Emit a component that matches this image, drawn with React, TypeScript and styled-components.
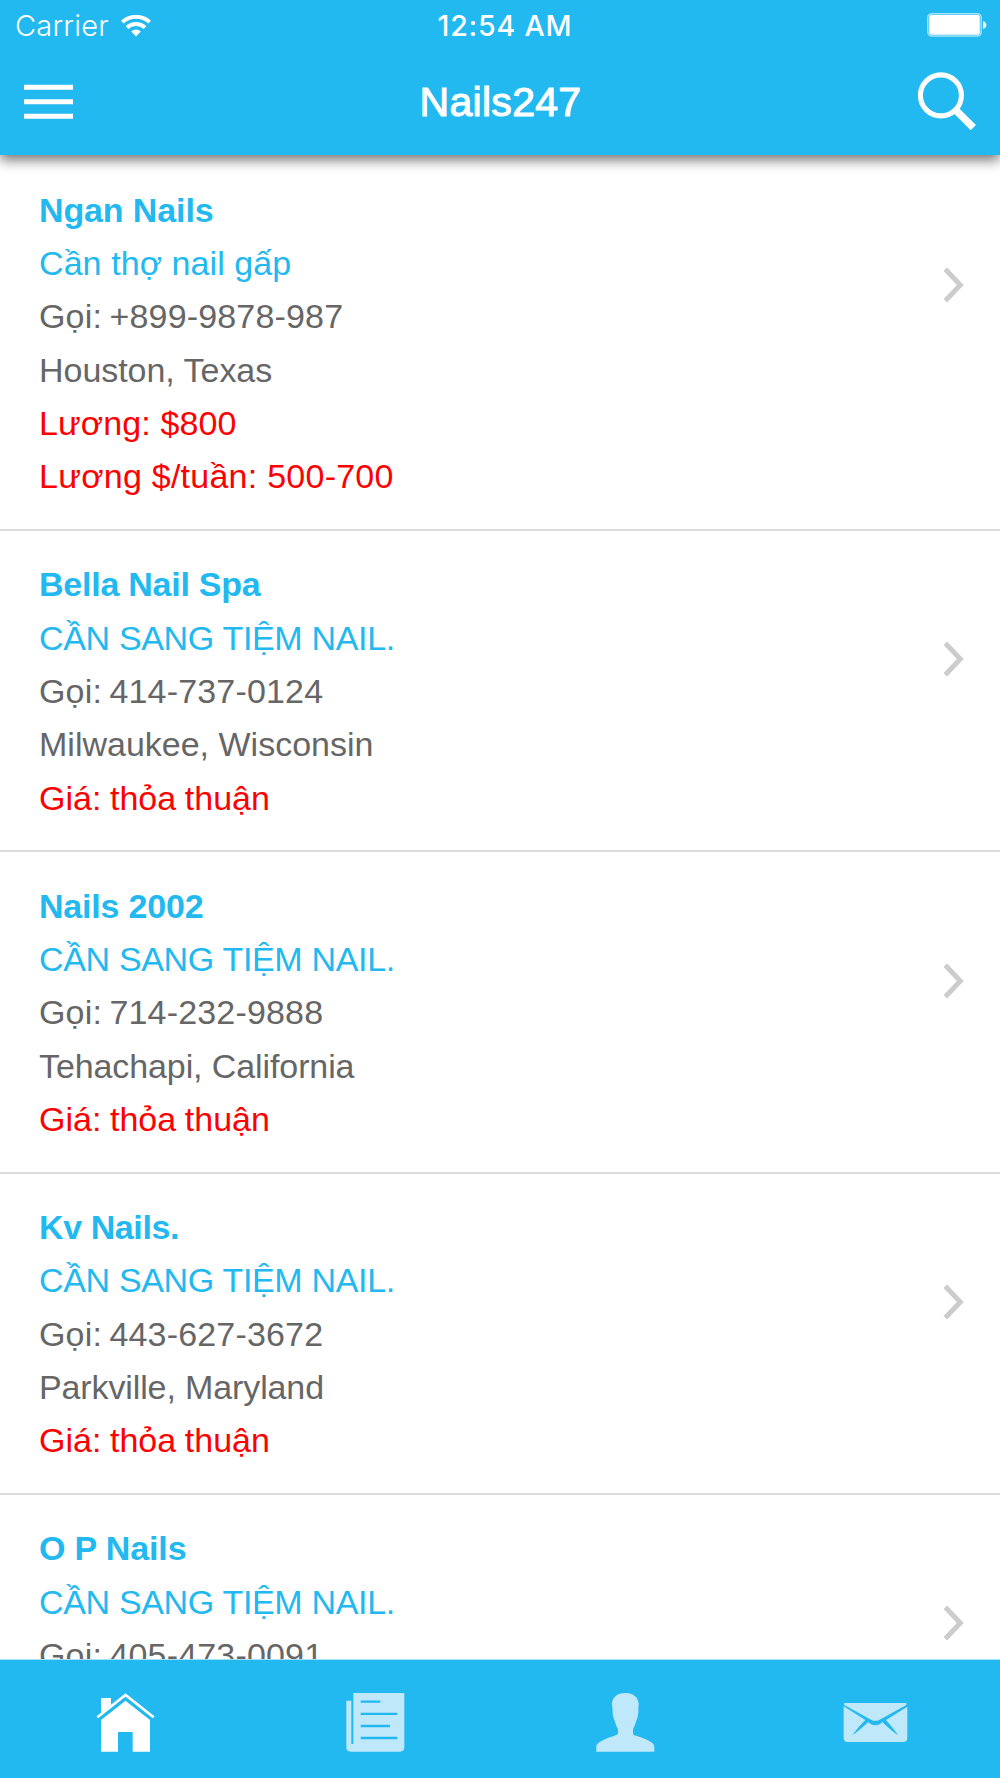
import React from 'react';
import styled, { createGlobalStyle } from 'styled-components';

const BLUE = '#22b8f0';
const PALE = '#bfe9fb';
const GREY = '#666';
const RED = '#ff0000';

const Global = createGlobalStyle`
  * { box-sizing: border-box; }
  html, body { margin: 0; padding: 0; background: #fff; }
  body { font-family: "Liberation Sans", Arial, Helvetica, sans-serif; }
  svg { display: block; flex: none; }
`;

const Screen = styled.div`
  width: 1000px;
  height: 1778px;
  display: flex;
  flex-direction: column;
  overflow: hidden;
  background: #fff;
`;

const Header = styled.header`
  position: relative;
  z-index: 1;
  flex: none;
  height: 155px;
  background: ${BLUE};
  color: #fff;
  box-shadow: 0 5px 12px rgba(0, 0, 0, 0.55);
`;

const StatusBar = styled.div`
  height: 50px;
  display: grid;
  grid-template-columns: 1fr auto 1fr;
  align-items: center;
  padding: 0 13px 0 15px;
  font-family: Inter, sans-serif;
  font-size: 29px;
`;

const Carrier = styled.div`
  display: flex;
  align-items: center;
  gap: 12px;
`;

const CarrierName = styled.span`
  padding-top: 1px;
  line-height: 50px;
  font-weight: 300;
  letter-spacing: 0.2px;
`;

const Clock = styled.time`
  padding: 1px 0 0 8px;
  line-height: 50px;
  font-weight: 500;
  font-size: 28.5px;
  letter-spacing: 0.85px;
`;

const Battery = styled.div`
  justify-self: end;
  margin-top: -1px;
`;

const NavBar = styled.div`
  height: 105px;
  display: grid;
  grid-template-columns: 1fr auto 1fr;
  padding: 0 23px 0 24px;
`;

const IconButton = styled.button<{ $end?: boolean; $top: number }>`
  justify-self: ${(p) => (p.$end ? 'end' : 'start')};
  align-self: start;
  margin: ${(p) => p.$top}px 0 0;
  padding: 0;
  border: 0;
  background: none;
`;

const Title = styled.h1`
  margin: 0;
  font-size: 41px;
  line-height: 105px;
  font-weight: 400;
  letter-spacing: 0.3px;
  -webkit-text-stroke: 1.1px #fff;
`;

const List = styled.main`
  flex: 1;
  min-height: 0;
  overflow: hidden;
  padding-top: 1.5px;
`;

const Item = styled.article`
  display: flex;
  justify-content: space-between;
  align-items: flex-start;
  padding: 27.3px 36px 25.37px 39px;
  border-bottom: 2px solid #dcdcdc;
`;

const Details = styled.div`
  display: flex;
  flex-direction: column;
`;

const Line = styled.p<{ $color: string; $track?: number; $word?: number }>`
  margin: 0;
  font-size: 34px;
  line-height: 53.333px;
  color: ${(p) => p.$color};
  letter-spacing: ${(p) => p.$track ?? 0}px;
  word-spacing: ${(p) => p.$word ?? 0}px;
  white-space: nowrap;
`;

const Name = styled(Line).attrs({ as: 'h2' })`
  font-weight: 700;
`;

const Chevron = styled.svg`
  margin-top: 83px;
`;

const TabBar = styled.nav`
  flex: none;
  height: 119px;
  display: grid;
  grid-template-columns: repeat(4, 1fr);
  border-top: 1px solid #a5e0f8;
  background: ${BLUE};
`;

const Tab = styled.a<{ $active?: boolean }>`
  display: flex;
  justify-content: center;
  padding-top: 30px;
  color: ${(p) => (p.$active ? '#fff' : PALE)};
`;

type Row = { text: string; track: number };

type Listing = {
  name: Row;
  headline: Row;
  phone: string;
  place?: Row;
  prices: Row[];
};

const selling: Row = { text: 'CẦN SANG TIỆM NAIL.', track: -0.33 };
const negotiable: Row = { text: 'Giá: thỏa thuận', track: 0.03 };

const listings: Listing[] = [
  {
    name: { text: 'Ngan Nails', track: -0.12 },
    headline: { text: 'Cần thợ nail gấp', track: 0.08 },
    phone: '+899-9878-987',
    place: { text: 'Houston, Texas', track: -0.04 },
    prices: [
      { text: 'Lương: $800', track: 0.1 },
      { text: 'Lương $/tuần: 500-700', track: 0.25 },
    ],
  },
  {
    name: { text: 'Bella Nail Spa', track: -0.24 },
    headline: selling,
    phone: '414-737-0124',
    place: { text: 'Milwaukee, Wisconsin', track: 0 },
    prices: [negotiable],
  },
  {
    name: { text: 'Nails 2002', track: -0.2 },
    headline: selling,
    phone: '714-232-9888',
    place: { text: 'Tehachapi, California', track: -0.1 },
    prices: [negotiable],
  },
  {
    name: { text: 'Kv Nails.', track: -0.4 },
    headline: selling,
    phone: '443-627-3672',
    place: { text: 'Parkville, Maryland', track: -0.12 },
    prices: [negotiable],
  },
  {
    name: { text: 'O P Nails', track: -0.14 },
    headline: selling,
    phone: '405-473-0091',
    prices: [],
  },
];

const WifiIcon = () => (
  <svg width="30" height="22" viewBox="0 0 30 22" fill="none" stroke="#fff">
    <path d="M1.3 7.2a20 20 0 0 1 27.4 0" strokeWidth="3.9" />
    <path d="M6 12.6a13.2 13.2 0 0 1 18 0" strokeWidth="3.9" />
    <path d="M15 21.6l-4.8-5a6.8 6.8 0 0 1 9.6 0z" fill="#fff" stroke="none" />
  </svg>
);

const BatteryIcon = () => (
  <svg width="60" height="24" viewBox="0 0 60 24">
    <rect x="0.8" y="0.7" width="53.4" height="22.4" rx="4" fill="none" stroke="#fff" strokeOpacity="0.6" strokeWidth="1.5" />
    <rect x="2.2" y="2" width="50.6" height="19.8" rx="2" fill="#fff" />
    <path d="M56 8.2c4.6 1 4.6 6.8 0 7.8z" fill="#fff" />
  </svg>
);

const MenuIcon = () => (
  <svg width="49" height="36" viewBox="0 0 49 36" fill="#fff">
    <path d="M0 .7h49v5H0zM0 15.2h49v5H0zM0 29.7h49v5H0z" />
  </svg>
);

const SearchIcon = () => (
  <svg width="60" height="60" viewBox="0 0 60 60" fill="none" stroke="#fff">
    <circle cx="23.9" cy="25.4" r="20.5" strokeWidth="5.1" />
    <path d="M38.5 39.8L56.3 57.6" strokeWidth="7.4" />
  </svg>
);

const HomeIcon = () => (
  <svg width="66.67" height="66.67" viewBox="275 210 200 200" fill="currentColor">
    <path d="M302 300L375.5 242 449 300V395H397V336H353V395H302z" />
    <path d="M302 234H332V254L302 279z" />
    <path d="M291 292L375.5 225 460 292" fill="none" stroke="currentColor" strokeWidth="8" />
  </svg>
);

const NewsIcon = () => (
  <svg width="66.67" height="66.67" viewBox="275 210 200 200" fill="currentColor">
    <path d="M309 219H462V382q0 13-13 13H301q-13 0-13-13V242H303V372H309z" />
    <path d="M331 245H390M331 281.5H441M331 318H419M331 354H441" stroke={BLUE} strokeWidth="7" />
  </svg>
);

const UserIcon = () => (
  <svg width="66.67" height="66.67" viewBox="275 210 200 200" fill="currentColor">
    <path d="M375 219c25 0 40 14 40 34c0 6-1 10-1 16c1 3 0 9-1 17c-2 13-6 16-8 26c-2 8-7 11-7 19v8c0 6 3 6 12 9c22 7 52 19 52 31v16H288V379c0-12 30-24 52-31c9-3 13-4 13-9v-8c0-8-5-11-7-19c-2-10-6-13-8-26c-1-8-2-14-1-17c0-6-2-10-2-16c0-20 15-34 40-34z" />
  </svg>
);

const MailIcon = () => (
  <svg width="66.67" height="66.67" viewBox="275 210 200 200" fill="currentColor">
    <path d="M282 249H468V255L388 299q-13 7-26 0L282 255z" />
    <path d="M280 259L345 300Q322 322 306 346Q326 332 354 306Q360 315 375 316Q390 315 396 306Q422 332 444 346Q427 322 407 300L471 260V354q0 12-12 12H292q-12 0-12-12z" />
  </svg>
);

const tabs = [
  { label: 'Home', Icon: HomeIcon },
  { label: 'News', Icon: NewsIcon },
  { label: 'Profile', Icon: UserIcon },
  { label: 'Messages', Icon: MailIcon },
];

export default function App() {
  return (
    <Screen>
      <Global />
      <Header>
        <StatusBar>
          <Carrier>
            <CarrierName>Carrier</CarrierName>
            <WifiIcon />
          </Carrier>
          <Clock>12:54 AM</Clock>
          <Battery>
            <BatteryIcon />
          </Battery>
        </StatusBar>
        <NavBar>
          <IconButton $top={34} aria-label="Menu">
            <MenuIcon />
          </IconButton>
          <Title>Nails247</Title>
          <IconButton $top={20} $end aria-label="Search">
            <SearchIcon />
          </IconButton>
        </NavBar>
      </Header>
      <List>
        {listings.map(({ name, headline, phone, place, prices }) => (
          <Item key={name.text}>
            <Details>
              <Name $color={BLUE} $track={name.track}>{name.text}</Name>
              <Line $color={BLUE} $track={headline.track}>{headline.text}</Line>
              <Line $color={GREY} $track={0.17} $word={-2.2}>Gọi: {phone}</Line>
              {place && <Line $color={GREY} $track={place.track}>{place.text}</Line>}
              {prices.map((p) => (
                <Line key={p.text} $color={RED} $track={p.track} $word={p === negotiable ? -1 : 0}>
                  {p.text}
                </Line>
              ))}
            </Details>
            <Chevron width="22" height="36" viewBox="0 0 22 36" fill="none" stroke="#ccc" strokeWidth="5">
              <path d="M3.3 2.3L18.3 18L3.3 33.7" />
            </Chevron>
          </Item>
        ))}
      </List>
      <TabBar>
        {tabs.map(({ label, Icon }, i) => (
          <Tab key={label} aria-label={label} $active={i === 0}>
            <Icon />
          </Tab>
        ))}
      </TabBar>
    </Screen>
  );
}
